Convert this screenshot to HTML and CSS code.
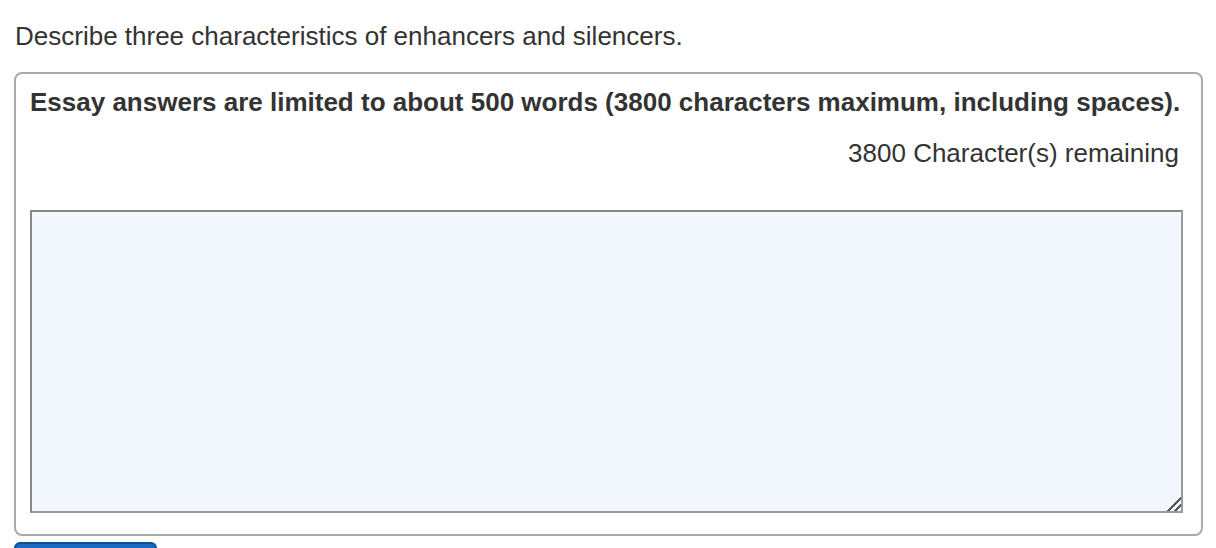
FILE: index.html
```html
<!DOCTYPE html>
<html lang="en">
  <head>
    <meta charset="UTF-8">
    <title>Essay question</title>
    <link rel="stylesheet" href="styles.css">
  </head>
  <body>
    <div class="question">
        <p class="prompt">Describe three characteristics of enhancers and silencers.</p>

        <div class="answer-box">
            <p class="limit">Essay answers are limited to about 500 words (3800 characters maximum, including spaces).</p>
            <div class="counter">3800 Character(s) remaining</div>
            <textarea class="essay" maxlength="3800"></textarea>
        </div>

        <button class="submit-button" type="button">Save Answer</button>
    </div>
  </body>
</html>
```

FILE: styles.css
```css
:root {
    --text-color: #333;
    --box-border: #aaa;
    --field-bg: #f3f7fe;
    --field-border: #999;
    --button-bg: #1a6ac4;
    --button-border: #0d4f8f;
}

body {
    font-family: 'Liberation Sans', Arial, sans-serif;
    margin: 0;
    padding: 0;
    background: #fff;
    color: var(--text-color);
}

.question {
    padding: 0 13px 0 14px;
}

.prompt {
    font-size: 26px;
    line-height: 30px;
    margin: 21px 0 21px 1px;
}

.answer-box {
    border: 2px solid var(--box-border);
    border-radius: 8px;
    padding: 13px 18px 21px 14px;
}

.limit {
    font-size: 26px;
    font-weight: 700;
    line-height: 30px;
    margin: 0;
}

.counter {
    font-size: 26px;
    line-height: 30px;
    text-align: right;
    margin-top: 21px;
    padding-right: 4px;
}

.essay {
    display: block;
    box-sizing: border-box;
    width: 100%;
    height: 303px;
    margin-top: 42px;
    background: var(--field-bg);
    border: 2px solid var(--field-border);
    border-top-color: #888;
    border-left-color: #888;
    resize: vertical;
    font-family: inherit;
    font-size: 16px;
}

.essay::-webkit-resizer {
    background: linear-gradient(135deg, transparent 0 52%, #555 52% 62%, transparent 62% 74%, #555 74% 84%, transparent 84%);
}

.submit-button {
    display: block;
    margin-top: 6px;
    width: 143px;
    padding: 20px 0 10px;
    background: var(--button-bg);
    border: 2px solid var(--button-border);
    border-radius: 6px;
    color: #fff;
    font-family: inherit;
    font-size: 18px;
}
```
